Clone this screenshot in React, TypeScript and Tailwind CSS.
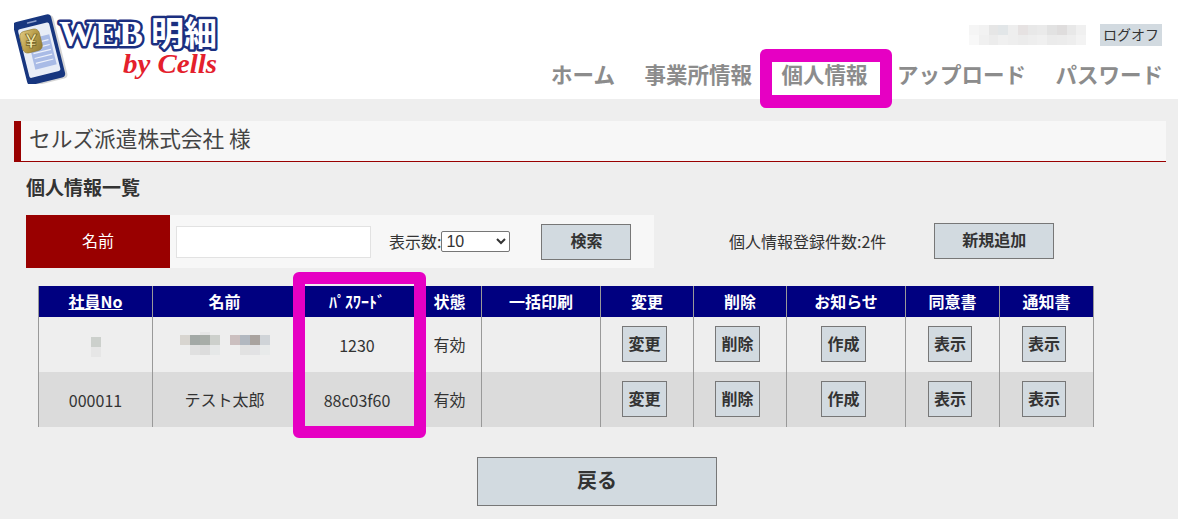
const font = { fontFamily: '"Noto Sans CJK JP", "Noto Sans", sans-serif' };

const navItems = ["ホーム", "事業所情報", "個人情報", "アップロード", "パスワード"];

const columns = [
  { label: "社員No", width: "w-[114px]", link: true },
  { label: "名前", width: "w-[144px]" },
  { label: "ﾊﾟｽﾜｰﾄﾞ", width: "w-[121px]" },
  { label: "状態", width: "w-[64px]" },
  { label: "一括印刷", width: "w-[119px]" },
  { label: "変更", width: "w-[93px]" },
  { label: "削除", width: "w-[93px]" },
  { label: "お知らせ", width: "w-[119px]" },
  { label: "同意書", width: "w-[94px]" },
  { label: "通知書", width: "w-[94px]" },
];

const rows = [
  { id: null, name: null, password: "1230", bg: "bg-[#eeeeee]" },
  { id: "000011", name: "テスト太郎", password: "88c03f60", bg: "bg-[#dbdbdb]" },
];

// pixelated blocks standing in for the blurred personal data
function Mosaic({ colors, cell = 10, firstRow }: { colors: string[][]; cell?: number; firstRow?: number }) {
  return (
    <div className="inline-flex flex-col align-middle">
      {colors.map((line, y) => (
        <div key={y} className="flex">
          {line.map((c, x) => (
            <span key={x} style={{ width: cell, height: y === 0 && firstRow ? firstRow : cell, background: c }} />
          ))}
        </div>
      ))}
    </div>
  );
}

function Logo() {
  return (
    <svg width="210" height="72" viewBox="0 0 210 72" className="block">
      <defs>
        <linearGradient id="coin" x1="0" y1="0" x2="1" y2="1">
          <stop offset="0" stopColor="#e2cc84" />
          <stop offset="0.5" stopColor="#b89c48" />
          <stop offset="1" stopColor="#8f7a35" />
        </linearGradient>
      </defs>
      <g transform="rotate(-14 26 39)">
        <rect x="6" y="5" width="39" height="65" rx="4" fill="#b9b9b9" opacity="0.6" transform="translate(2 1.5)" />
        <rect x="6" y="5" width="39" height="65" rx="4" fill="#17367f" />
        <rect x="9.5" y="13" width="32" height="50" rx="2" fill="#e8edf7" />
        <rect x="20" y="8" width="10" height="1.6" rx="0.8" fill="#8fa0cc" />
        <rect x="17" y="25" width="22" height="31" fill="#a9bbe6" />
        <path d="M19 30h18M19 35h18M19 40h18M19 45h18M19 50h18" stroke="#eef2fb" strokeWidth="1.2" />
      </g>
      <rect x="7" y="18" width="20" height="22" rx="5" fill="url(#coin)" stroke="#8a7634" strokeWidth="0.6" transform="rotate(-14 17 29)" />
      <text x="17" y="36" textAnchor="middle" fontFamily="Liberation Sans" fontWeight="700" fontSize="21" fill="#f6e9a8" stroke="#6b5a22" strokeWidth="0.7">¥</text>
      <text
        x="45"
        y="34"
        fontFamily="Liberation Serif"
        fontWeight="700"
        fontSize="36"
        fill="#ffffff"
        stroke="#1b2f80"
        strokeWidth="5"
        paintOrder="stroke"
        strokeLinejoin="round"
        textLength="84"
        lengthAdjust="spacingAndGlyphs"
      >
        WEB
      </text>
      <text
        x="137"
        y="34"
        fontFamily="Noto Sans CJK JP"
        fontWeight="700"
        fontSize="34"
        fill="#ffffff"
        stroke="#1b2f80"
        strokeWidth="5"
        paintOrder="stroke"
        strokeLinejoin="round"
        textLength="66"
        lengthAdjust="spacingAndGlyphs"
      >
        明細
      </text>
      <text
        x="109"
        y="61"
        fontFamily="Liberation Serif"
        fontStyle="italic"
        fontWeight="700"
        fontSize="27"
        fill="#e4202c"
        textLength="94"
        lengthAdjust="spacingAndGlyphs"
      >
        by Cells
      </text>
    </svg>
  );
}

function ActionButton({ label }: { label: string }) {
  return (
    <button
      className={`mr-[5px] mb-[2px] h-9 border border-[#777777] bg-[#d2dae0] pb-[2px] text-base font-bold text-[#333333] ${
        label === "表示" ? "w-[44px]" : "w-[45px]"
      }`}
    >
      {label}
    </button>
  );
}

export default function App() {
  return (
    <div className="min-h-screen overflow-hidden bg-[#eeeeee] text-[#333333]" style={font}>
      <header className="flex h-[99px] justify-between bg-white pr-4 pl-[14px]">
        <div className="pt-[12px]">
          <Logo />
        </div>
        <div className="flex flex-col items-end">
          <div className="mt-6 flex h-[22px] items-center">
            <Mosaic
              cell={9.75}
              colors={[
                ["#f5f5f5", "#f2f2f2", "#e6e6e6", "#e2e6e8", "#eeeeee", "#e6e2e2", "#e8e8e8", "#eaeaea", "#e2e2e2", "#dfdddd", "#e8e8e8", "#f0f0f0"],
                ["#f8f8f8", "#f0f0f0", "#ececec", "#f0f0f0", "#eeeeee", "#ececec", "#eeeeee", "#f0f0f0", "#ebebeb", "#ececec", "#eeeeee", "#f3f3f3"],
              ]}
            />
            <button className="ml-[14px] h-[22px] w-[62px] bg-[#d2dae0] pb-[2px] text-sm text-[#333333]">ログオフ</button>
          </div>
          <nav className="mt-[13px] -mr-[1px] flex gap-[29.5px] text-[21.5px] leading-[30px] font-bold text-[#8c8c8c]">
            {navItems.map((item) => (
              <a key={item} className="relative whitespace-nowrap">
                {item}
                {item === "個人情報" && (
                  <span className="absolute -top-[10px] -right-[25px] -left-[21px] h-[59px] rounded-md border-x-[12px] border-y-[13px] border-[#e600c3]" />
                )}
              </a>
            ))}
          </nav>
        </div>
      </header>

      <main className="px-3 pt-[22px]">
        <h1 className="ml-[2px] h-[41px] w-[1152px] border-b border-l-[7px] border-[#990000] bg-[#f7f7f7] pl-2 text-[21.7px] leading-[34px] font-normal text-[#444444]">
          セルズ派遣株式会社 様
        </h1>

        <h2 className="mt-[13px] ml-[14px] text-[19px] leading-6 font-bold">個人情報一覧</h2>

        <div className="mt-[16px] ml-[14px] flex items-start text-base">
          <div className="flex h-[53px] w-[628px] items-center bg-[#f7f7f7]">
            <div className="flex h-full w-[144px] items-center justify-center bg-[#990000] pb-1 text-white">名前</div>
            <input className="ml-[6px] h-8 w-[195px] border border-[#e2e2e2] bg-white" />
            <span className="ml-[18px] pb-[2px]">表示数:</span>
            <select
              defaultValue="10"
              className="h-[21px] w-[69px] rounded-[2px] border border-[#767676] bg-white text-base leading-none"
              style={{ fontFamily: '"Liberation Sans", sans-serif' }}
            >
              <option value="10">10</option>
            </select>
            <button className="ml-[31px] h-9 w-[90px] border border-[#777777] bg-[#d2dae0] pb-1 font-bold">検索</button>
          </div>
          <span className="mt-[14px] ml-[75px] leading-6">個人情報登録件数:2件</span>
          <button className="mt-2 ml-[48px] h-9 w-[120px] border border-[#777777] bg-[#d2dae0] pb-1 font-bold">新規追加</button>
        </div>

        <div className="relative mt-[18px] ml-[26px] w-[1056px]">
          <table className="table-fixed border-collapse">
            <thead>
              <tr className="h-[31px] bg-[#000080] text-base text-white">
                {columns.map((c) => (
                  <th key={c.label} className={`${c.width} border-x border-[#999999] p-0 pb-[2px] font-bold`}>
                    {c.link ? <a className="underline">{c.label}</a> : c.label}
                  </th>
                ))}
              </tr>
            </thead>
            <tbody>
              {rows.map((r) => (
                <tr key={r.password} className={`h-[55px] text-center text-base ${r.bg}`}>
                  <td className="border-x border-[#999999] p-0">
                    {r.id ?? <Mosaic colors={[["#ccd0cc"], ["#e6e6e6"]]} />}
                  </td>
                  <td className="border-x border-[#999999] p-0 pb-[2px]">
                    {r.name ?? (
                      <div className="flex justify-center gap-[10px]">
                        <Mosaic
                          firstRow={3}
                          colors={[
                            ["#eeeeee", "#eeeeee", "#e6e6e6", "#eeeeee"],
                            ["#d8d5d0", "#a3a9a6", "#a8ada8", "#cdd0cc"],
                            ["#eeeeee", "#e0e0e0", "#dcdcdc", "#e6e8e8"],
                          ]}
                        />
                        <Mosaic
                          firstRow={3}
                          colors={[
                            ["#eeeeee", "#eeeeee", "#eeeeee", "#eeeeee"],
                            ["#cbbfbf", "#b2b8c0", "#a9a39f", "#d0d4d8"],
                            ["#eeeeee", "#e2e2e2", "#e2e2e4", "#e8eaea"],
                          ]}
                        />
                      </div>
                    )}
                  </td>
                  <td className="border-x border-[#999999] p-0">{r.password}</td>
                  <td className="border-x border-[#999999] p-0 pb-[2px]">有効</td>
                  <td className="border-x border-[#999999] p-0" />
                  {["変更", "削除", "作成", "表示", "表示"].map((label, i) => (
                    <td key={i} className="border-x border-[#999999] p-0">
                      <ActionButton label={label} />
                    </td>
                  ))}
                </tr>
              ))}
            </tbody>
          </table>
          <div className="absolute -top-[14px] left-[255px] h-[166px] w-[133px] rounded-md border-[12px] border-[#e600c3]" />
        </div>

        <div className="mt-[30px] flex justify-center pl-4">
          <button className="h-[49px] w-[240px] border border-[#777777] bg-[#d2dae0] pb-1 text-xl font-bold">戻る</button>
        </div>
      </main>
    </div>
  );
}
